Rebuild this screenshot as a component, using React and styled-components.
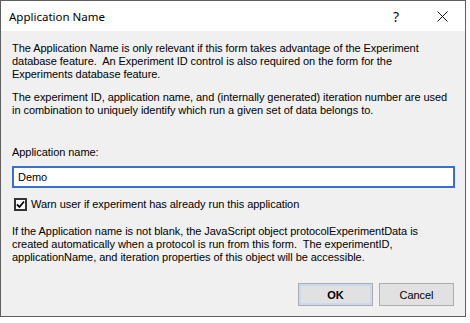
import React from 'react';
import styled, { createGlobalStyle } from 'styled-components';

const GlobalStyle = createGlobalStyle`
  body {
    margin: 0;
    background: #ffffff;
  }
`;

const Window = styled.div`
  width: 466px;
  height: 317px;
  box-sizing: border-box;
  border: 1px solid #5f5f5f;
  display: flex;
  flex-direction: column;
  background: #f0f0f0;
  font-family: 'Liberation Sans', Arial, sans-serif;
  letter-spacing: -0.05px;
  color: #000;
`;

const TitleBar = styled.div`
  height: 30px;
  flex: none;
  background: #ffffff;
  display: flex;
  align-items: center;
`;

const Title = styled.div`
  flex: 1;
  padding-left: 8px;
  font-family: 'Noto Sans', 'Open Sans', sans-serif;
  font-size: 11.5px;
  letter-spacing: 0;
  color: #000;
`;

const CaptionButton = styled.div`
  width: 46px;
  height: 30px;
  display: flex;
  align-items: center;
  justify-content: center;
  font-family: 'Noto Sans', sans-serif;
  font-size: 14px;
  color: #111;
`;

const Body = styled.div`
  flex: 1;
  display: flex;
  flex-direction: column;
  padding: 11px 10px 10px 11px;
`;

const Para = styled.p`
  margin: 0 0 ${(p) => p.$gap || 0}px;
  font-size: 11px;
  line-height: 13px;
  white-space: pre;
`;

const Label = styled.div`
  font-size: 11px;
  line-height: 13px;
  margin-bottom: 7px;
`;

const TextInput = styled.div`
  height: 22px;
  box-sizing: border-box;
  border: 2px solid #3a6fd0;
  background: #ffffff;
  display: flex;
  align-items: center;
  padding-left: 4px;
  font-size: 11px;
  margin-bottom: 10px;
`;

const CheckRow = styled.div`
  display: flex;
  align-items: center;
  gap: 4px;
  font-size: 11px;
  line-height: 13px;
  margin-bottom: 14px;
  padding-left: 2px;
`;

const Box = styled.div`
  width: 13px;
  height: 13px;
  box-sizing: border-box;
  border: 2px solid #333333;
  background: #ffffff;
  display: flex;
  align-items: center;
  justify-content: center;
`;

const Buttons = styled.div`
  margin-top: auto;
  display: flex;
  justify-content: flex-end;
  gap: 6px;
  padding-right: 1px;
`;

const Button = styled.div`
  width: 75px;
  height: 23px;
  box-sizing: border-box;
  border: 1px solid #adadad;
  background: #e1e1e1;
  box-shadow: ${(p) => (p.$default ? 'inset 0 0 0 2px #c9d9f1' : 'none')};
  display: flex;
  align-items: center;
  justify-content: center;
  font-size: 11px;
  font-weight: ${(p) => (p.$default ? 700 : 400)};
`;

const intro = [
  'The Application Name is only relevant if this form takes advantage of the Experiment',
  'database feature.  An Experiment ID control is also required on the form for the',
  'Experiments database feature.',
];

const usage = [
  'The experiment ID, application name, and (internally generated) iteration number are used',
  'in combination to uniquely identify which run a given set of data belongs to.',
];

const note = [
  'If the Application name is not blank, the JavaScript object protocolExperimentData is',
  'created automatically when a protocol is run from this form.  The experimentID,',
  'applicationName, and iteration properties of this object will be accessible.',
];

export default function App() {
  return (
    <>
      <GlobalStyle />
      <Window>
        <TitleBar>
          <Title>Application Name</Title>
          <CaptionButton>?</CaptionButton>
          <CaptionButton>
            <svg width="11" height="11" viewBox="0 0 11 11">
              <path d="M0.5 0.5 L10.5 10.5 M10.5 0.5 L0.5 10.5" stroke="#111" strokeWidth="1" />
            </svg>
          </CaptionButton>
        </TitleBar>
        <Body>
          <Para $gap={10}>{intro.join('\n')}</Para>
          <Para $gap={29}>{usage.join('\n')}</Para>
          <Label>Application name:</Label>
          <TextInput>Demo</TextInput>
          <CheckRow>
            <Box>
              <svg width="9" height="9" viewBox="0 0 9 9">
                <path d="M1 4.5 L3.5 7 L8 1.5" stroke="#000" strokeWidth="1.8" fill="none" />
              </svg>
            </Box>
            Warn user if experiment has already run this application
          </CheckRow>
          <Para>{note.join('\n')}</Para>
          <Buttons>
            <Button $default>OK</Button>
            <Button>Cancel</Button>
          </Buttons>
        </Body>
      </Window>
    </>
  );
}
